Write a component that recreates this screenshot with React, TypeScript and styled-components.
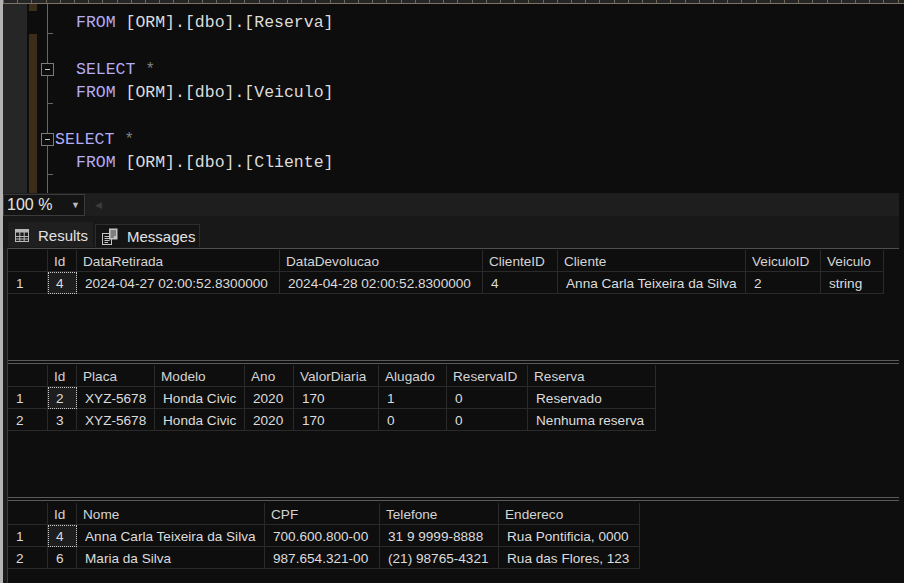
import styled, { createGlobalStyle } from "styled-components";

const GlobalStyle = createGlobalStyle`
  html, body { margin: 0; padding: 0; background: #0e0e0e; }
  body {
    width: 904px;
    height: 583px;
    overflow: hidden;
    font-family: "Liberation Sans", Arial, sans-serif;
  }
  #root { height: 100%; }
`;

const Window = styled.div`
  display: flex;
  flex-direction: column;
  width: 904px;
  height: 583px;
  box-sizing: border-box;
  border-left: 3px solid #b4b4b4;
  background: #0e0e0e;
`;

// scroll map strip at the very top
const Ruler = styled.div`
  height: 3px;
  border-bottom: 1px solid #7a7262;
  background: repeating-linear-gradient(90deg, #6f675a 0 1px, #262626 1px 14.2px);
`;

/* ---------- editor ---------- */
const Editor = styled.div`
  display: flex;
  height: 189px;
  overflow: hidden;
  background: #0d0d0d;
`;

const Gutter = styled.div`
  width: 24px;
  flex: none;
  background: #262626;
`;

const Lines = styled.div`
  display: flex;
  flex-direction: column;
  margin-top: -16.6px;
`;

const LineRow = styled.div`
  display: flex;
  height: 23.4px;
  flex: none;
`;

const ChangeCell = styled.div<{ $changed: boolean }>`
  width: 13px;
  flex: none;
  display: flex;
  padding-left: 2px;
  box-sizing: border-box;
  &::before {
    content: "";
    width: 8px;
    background: ${p => (p.$changed ? "#3b2d1a" : "transparent")};
  }
`;

const OutlineCell = styled.div<{ $end: boolean }>`
  width: 15px;
  flex: none;
  position: relative;
  &::before {
    content: "";
    position: absolute;
    left: 7px;
    top: 0;
    bottom: 0;
    width: 1px;
    background: #666;
  }
  &::after {
    content: "";
    display: ${p => (p.$end ? "block" : "none")};
    position: absolute;
    left: 7px;
    bottom: 0;
    width: 6px;
    height: 1px;
    background: #666;
  }
`;

const FoldBox = styled.div`
  position: absolute;
  left: 1px;
  top: 5px;
  width: 11px;
  height: 11px;
  border: 1px solid #7c7c7c;
  background: #0d0d0d;
  z-index: 1;
  &::after {
    content: "";
    position: absolute;
    left: 3px;
    top: 5px;
    width: 5px;
    height: 1px;
    background: #c4c4c4;
  }
`;

const CodeText = styled.div<{ $indent: number }>`
  padding-left: ${p => p.$indent}px;
  font-family: "Liberation Mono", "DejaVu Sans Mono", monospace;
  font-size: 16.5px;
  line-height: 23.4px;
  white-space: pre;
  color: #dcdcdc;
`;

const Tok = styled.span<{ $kind: "kw" | "id" | "op" }>`
  color: ${p => (p.$kind === "kw" ? "#b3acf4" : p.$kind === "op" ? "#808080" : "#dcdcdc")};
`;

/* ---------- bars ---------- */
const Lower = styled.div`
  flex: 1;
  display: flex;
  flex-direction: column;
  margin-right: 5px;
  min-height: 0;
`;

const ScrollRow = styled.div`
  height: 23px;
  flex: none;
  display: flex;
  align-items: center;
  background: #1e1e1e;
`;

const ZoomBox = styled.div`
  width: 82px;
  height: 22px;
  box-sizing: border-box;
  border: 1px solid #3b3b3b;
  background: #141414;
  display: flex;
  align-items: center;
  justify-content: space-between;
  padding: 0 4px 0 3px;
  font-size: 16px;
  color: #e4e4e4;
`;

const DropArrow = styled.span`
  font-size: 9px;
  color: #bcbcbc;
`;

const ScrollArrow = styled.span`
  margin-left: 10px;
  font-size: 9px;
  color: #3c3c3c;
`;

const TabRow = styled.div`
  height: 32px;
  flex: none;
  display: flex;
  align-items: flex-end;
  gap: 2px;
  padding-left: 5px;
  padding-bottom: 1px;
  box-sizing: border-box;
  background: #181818;
`;

const Tab = styled.div<{ $active?: boolean }>`
  height: ${p => (p.$active ? 25 : 23)}px;
  box-sizing: border-box;
  display: flex;
  align-items: center;
  gap: 9px;
  padding: 0 4px 0 6px;
  font-size: 15px;
  color: #e2e2e2;
  background: ${p => (p.$active ? "#1f1f1f" : "#141414")};
  border: 1px solid ${p => (p.$active ? "transparent" : "#2d2d2d")};
  border-bottom: none;
`;

/* ---------- results ---------- */
const ResultsArea = styled.div`
  flex: 1;
  display: flex;
  padding-left: 4px;
  background: #1b1b1b;
  min-height: 0;
`;

const Pane = styled.div`
  flex: 1;
  display: flex;
  flex-direction: column;
  background: #0e0e0e;
  border-left: 1px solid #3a3a3a;
  border-top: 1px solid #4e4e4e;
  overflow: hidden;
`;

const GridSection = styled.div<{ $h?: number }>`
  ${p => (p.$h ? `height: ${p.$h}px; flex: none;` : "flex: 1;")}
  padding-top: ${p => (p.$h ? 1 : 2)}px;
  box-sizing: border-box;
  overflow: hidden;
`;

const Separator = styled.div`
  height: 4px;
  flex: none;
  box-sizing: border-box;
  border-top: 1px solid #5a5a5a;
  border-bottom: 1px solid #5a5a5a;
`;

const Grid = styled.div<{ $cols: string }>`
  display: grid;
  grid-template-columns: ${p => p.$cols};
  width: max-content;
`;

const Cell = styled.div<{ $header?: boolean; $focus?: boolean }>`
  height: 22px;
  box-sizing: border-box;
  border-right: 1px solid #2a2a2a;
  border-bottom: 1px solid #2a2a2a;
  padding-left: ${p => (p.$header ? 6 : 8)}px;
  font-size: 13.6px;
  line-height: 24px;
  white-space: nowrap;
  overflow: hidden;
  color: ${p => (p.$header ? "#d4d4d4" : "#dcdcdc")};
  background: ${p => (p.$focus ? "#1e1e1e" : "transparent")};
  outline: ${p => (p.$focus ? "1px dotted #c8c8c8" : "none")};
  outline-offset: -1px;
`;

/* ---------- icons ---------- */
const GridIcon = () => (
  <svg width="14" height="13" viewBox="0 0 14 13">
    <rect x="0.5" y="0.5" width="13" height="12" fill="none" stroke="#b8b8b8" />
    <rect x="0.5" y="0.5" width="13" height="3" fill="#b8b8b8" />
    <path d="M0.5 7.5H13.5M0.5 10H13.5M4.8 0.5V12.5M9.2 0.5V12.5" stroke="#b8b8b8" fill="none" />
  </svg>
);

const MessagesIcon = () => (
  <svg width="16" height="17" viewBox="0 0 16 17">
    <rect x="0.5" y="5.5" width="9" height="11" fill="#141414" stroke="#c4c4c4" />
    <path d="M2.5 8.5H7.5M2.5 10.5H7.5M2.5 12.5H7.5M2.5 14.5H6" stroke="#c4c4c4" />
    <rect x="7" y="0.5" width="8.5" height="11" fill="#c4c4c4" />
    <path d="M8.5 3H14M8.5 5H14M8.5 7H14M8.5 9H12" stroke="#3a3a3a" />
  </svg>
);

/* ---------- data ---------- */
type Kind = "kw" | "id" | "op";
type Line = {
  changed: boolean;
  fold: "line" | "end" | "box";
  indent: number;
  toks: [string, Kind][];
};

const from = (table: string): [string, Kind][] => [
  ["FROM", "kw"],
  [` [ORM].[dbo].[${table}]`, "id"],
];
const select: [string, Kind][] = [
  ["SELECT", "kw"],
  [" ", "id"],
  ["*", "op"],
];

const code: Line[] = [
  { changed: true, fold: "line", indent: 0, toks: [] },
  { changed: false, fold: "end", indent: 21, toks: from("Reserva") },
  { changed: true, fold: "line", indent: 0, toks: [] },
  { changed: true, fold: "box", indent: 21, toks: select },
  { changed: true, fold: "end", indent: 21, toks: from("Veiculo") },
  { changed: true, fold: "line", indent: 0, toks: [] },
  { changed: true, fold: "box", indent: 0, toks: select },
  { changed: true, fold: "end", indent: 21, toks: from("Cliente") },
  { changed: true, fold: "line", indent: 0, toks: [] },
];

type Result = { h?: number; cols: string[]; widths: number[]; rows: string[][] };

const results: Result[] = [
  {
    h: 111,
    cols: ["Id", "DataRetirada", "DataDevolucao", "ClienteID", "Cliente", "VeiculoID", "Veiculo"],
    widths: [29, 203, 203, 75, 188, 75, 63],
    rows: [["4", "2024-04-27 02:00:52.8300000", "2024-04-28 02:00:52.8300000", "4", "Anna Carla Teixeira da Silva", "2", "string"]],
  },
  {
    h: 133,
    cols: ["Id", "Placa", "Modelo", "Ano", "ValorDiaria", "Alugado", "ReservaID", "Reserva"],
    widths: [29, 78, 90, 49, 85, 68, 81, 128],
    rows: [
      ["2", "XYZ-5678", "Honda Civic", "2020", "170", "1", "0", "Reservado"],
      ["3", "XYZ-5678", "Honda Civic", "2020", "170", "0", "0", "Nenhuma reserva"],
    ],
  },
  {
    cols: ["Id", "Nome", "CPF", "Telefone", "Endereco"],
    widths: [29, 188, 115, 119, 141],
    rows: [
      ["4", "Anna Carla Teixeira da Silva", "700.600.800-00", "31 9 9999-8888", "Rua Pontificia, 0000"],
      ["6", "Maria da Silva", "987.654.321-00", "(21) 98765-4321", "Rua das Flores, 123"],
    ],
  },
];

const ResultGrid = ({ result }: { result: Result }) => (
  <Grid $cols={[40, ...result.widths].map(w => `${w}px`).join(" ")}>
    <Cell $header />
    {result.cols.map(c => (
      <Cell $header key={c}>{c}</Cell>
    ))}
    {result.rows.map((row, r) => [
      <Cell key={`n${r}`}>{r + 1}</Cell>,
      ...row.map((v, i) => (
        <Cell key={`${r}-${i}`} $focus={r === 0 && i === 0}>
          {v}
        </Cell>
      )),
    ])}
  </Grid>
);

export default function App() {
  return (
    <>
      <GlobalStyle />
      <Window>
        <Ruler />
        <Editor>
          <Gutter />
          <Lines>
            {code.map((line, i) => (
              <LineRow key={i}>
                <ChangeCell $changed={line.changed} />
                <OutlineCell $end={line.fold === "end"}>
                  {line.fold === "box" && <FoldBox />}
                </OutlineCell>
                <CodeText $indent={line.indent}>
                  {line.toks.map(([t, k], j) => (
                    <Tok key={j} $kind={k}>{t}</Tok>
                  ))}
                </CodeText>
              </LineRow>
            ))}
          </Lines>
        </Editor>
        <Lower>
          <ScrollRow>
            <ZoomBox>
              100 %<DropArrow>▼</DropArrow>
            </ZoomBox>
            <ScrollArrow>◀</ScrollArrow>
          </ScrollRow>
          <TabRow>
            <Tab $active>
              <GridIcon />
              Results
            </Tab>
            <Tab>
              <MessagesIcon />
              Messages
            </Tab>
          </TabRow>
          <ResultsArea>
            <Pane>
              {results.map((res, i) => [
                i > 0 && <Separator key={`s${i}`} />,
                <GridSection key={`g${i}`} $h={res.h}>
                  <ResultGrid result={res} />
                </GridSection>,
              ])}
            </Pane>
          </ResultsArea>
        </Lower>
      </Window>
    </>
  );
}
